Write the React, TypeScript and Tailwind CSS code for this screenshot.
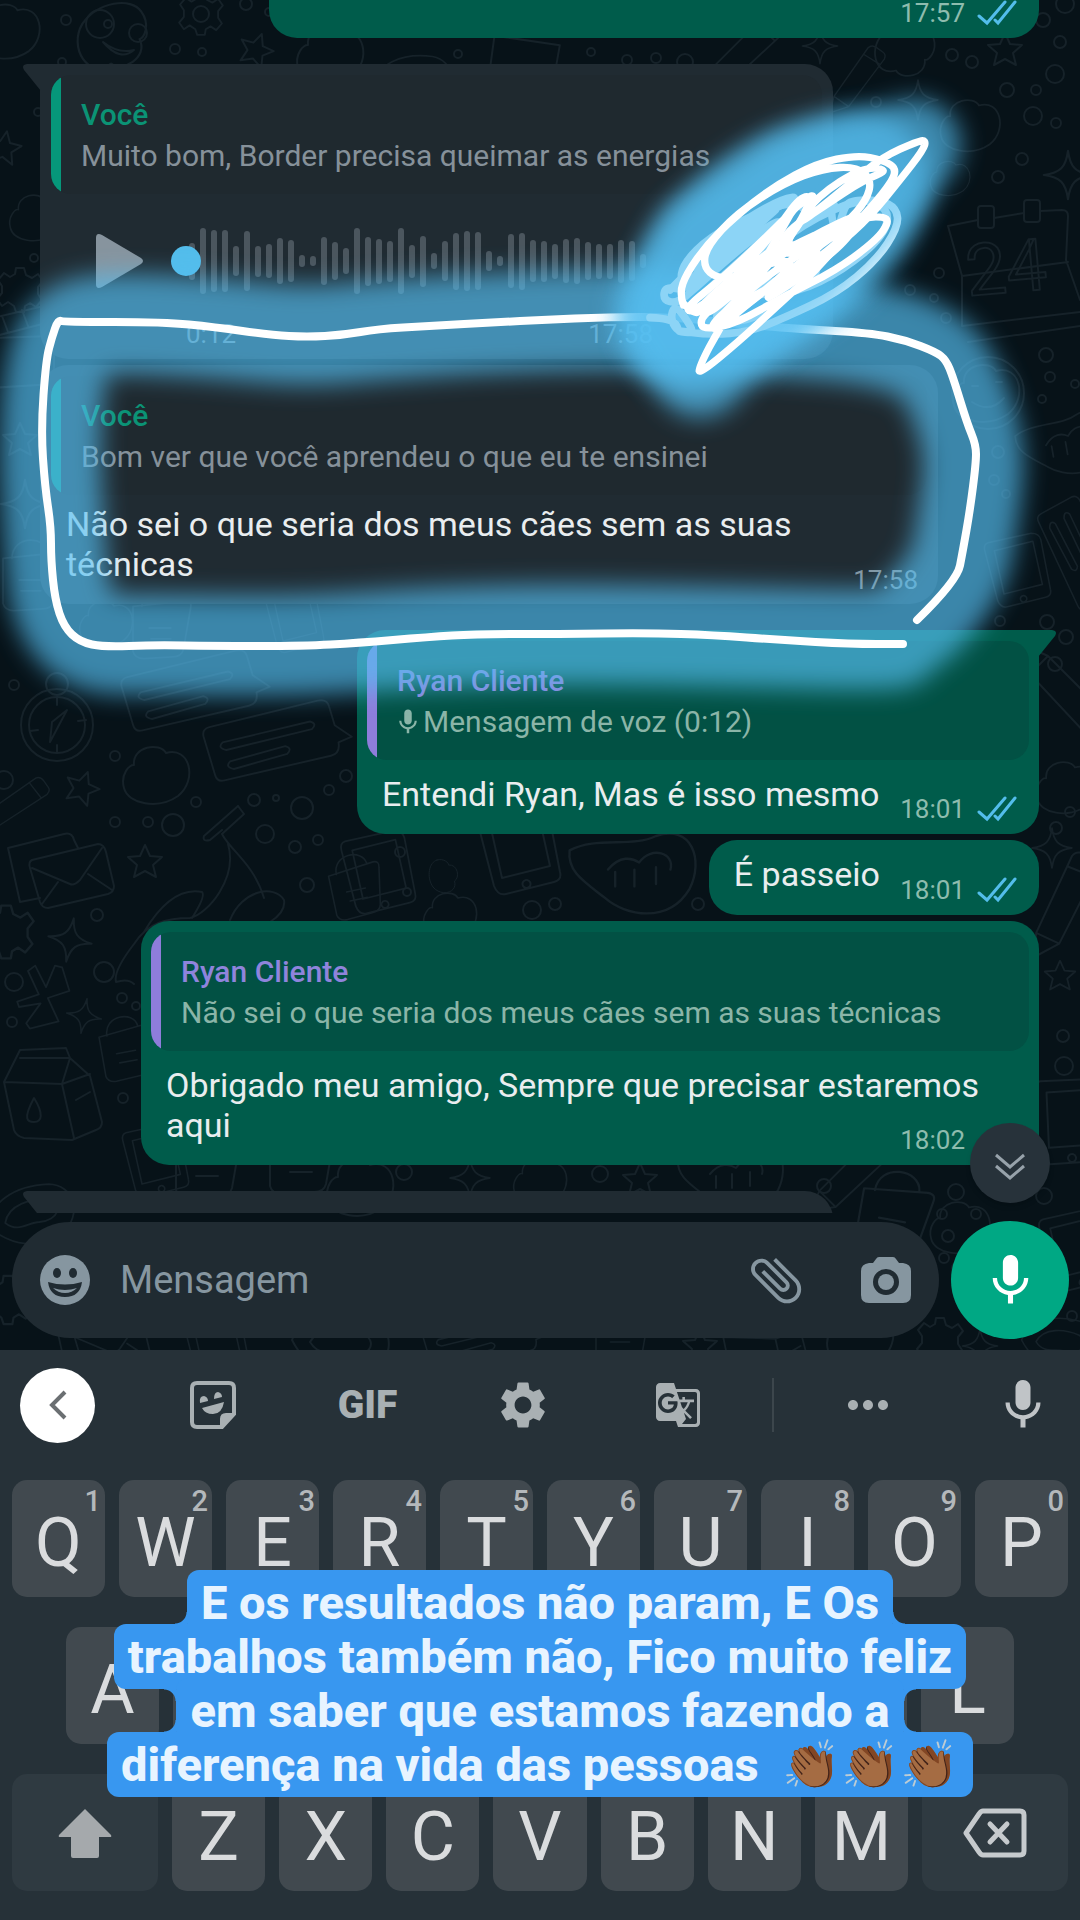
import { MdAttachFile, MdGTranslate, MdMic, MdMoreHoriz, MdSettings } from "react-icons/md";
import type { ReactNode } from "react";

type Point = [number, number];

/* Rounds a list of points into one continuous pen stroke. */
function smooth(points: Point[]) {
  let d = `M${points[0][0]} ${points[0][1]}`;
  for (let i = 1; i < points.length - 1; i++) {
    const [x, y] = points[i];
    const [nx, ny] = points[i + 1];
    d += ` Q${x} ${y} ${(x + nx) / 2} ${(y + ny) / 2}`;
  }
  const last = points[points.length - 1];
  return `${d} L${last[0]} ${last[1]}`;
}

const frame = smooth([
  [917, 620], [957, 581], [963, 550], [970, 510], [976, 463], [976, 445], [967, 423], [953, 377], [946, 360],
  [936, 352], [905, 340], [870, 333], [801, 329], [760, 326], [674, 317], [609, 317], [540, 320], [500, 322],
  [428, 326], [378, 329], [343, 335], [307, 337], [271, 335], [214, 327], [164, 322], [64, 322], [58, 320],
  [52, 337], [46, 360], [41, 430], [45, 487], [51, 527], [51, 560], [55, 600], [64, 627], [80, 642], [104, 647],
  [154, 645], [214, 646], [304, 646], [357, 643], [429, 637], [475, 634], [557, 634], [650, 633], [712, 635],
  [781, 640], [850, 644], [903, 644],
]);

const frameGlow = smooth([
  [917, 620], [957, 581], [968, 520], [976, 455], [960, 400], [936, 355], [870, 333], [760, 326], [640, 318],
  [500, 322], [378, 330], [307, 337], [214, 328], [110, 322], [66, 332], [54, 380], [50, 440], [52, 500],
  [56, 560], [62, 610], [90, 644], [154, 645], [304, 646], [429, 637], [557, 634], [700, 636], [860, 640],
  [895, 638],
]);

const scribbleUnder = smooth([
  [0, 563], [70, 565], [90, 610], [60, 570], [75, 520], [130, 600], [120, 610], [70, 600], [180, 615], [300, 605], [400, 565],
  [560, 490], [680, 390], [745, 290], [740, 235], [690, 210], [600, 210], [580, 240], [560, 320], [540, 240],
  [560, 215], [490, 260], [430, 210], [300, 260], [180, 320], [100, 400], [90, 460], [140, 440], [260, 320], [400, 220],
  [330, 280], [190, 420], [100, 480], [45, 470], [40, 510], [80, 520], [130, 480], [230, 390], [340, 300],
  [420, 260], [300, 420], [200, 480], [300, 500], [420, 480], [520, 420], [440, 420], [280, 500], [180, 560],
  [250, 580], [350, 550],
]);

const scribbleUnderFill = smooth([
  [60, 480], [110, 430], [180, 350], [290, 265], [400, 205], [450, 200], [340, 250], [200, 350], [130, 440],
  [150, 450], [260, 350], [400, 260], [360, 310], [240, 420], [150, 500], [170, 500], [300, 410], [460, 280],
  [640, 200], [720, 240], [700, 320], [580, 420], [440, 490], [300, 490],
]);

const scribbleOver = smooth([
  [100, 525], [88, 490], [110, 430], [170, 345], [250, 265], [370, 170], [500, 100], [620, 75], [700, 90],
  [745, 120], [700, 190], [610, 290], [500, 420], [380, 530], [260, 640], [150, 730], [145, 715], [210, 590],
  [290, 480], [420, 330], [490, 200], [450, 200], [380, 300], [220, 480], [120, 550], [110, 530], [210, 450],
  [350, 320], [470, 200], [500, 195], [420, 330], [330, 380], [180, 540], [150, 570], [160, 600], [260, 580],
  [400, 500], [560, 420], [680, 330], [718, 275], [700, 260], [640, 262], [500, 310], [330, 400], [210, 500],
  [150, 560], [180, 540], [330, 420], [480, 320], [650, 240], [580, 300], [400, 400], [240, 530], [180, 590],
  [200, 600], [320, 500], [440, 400], [380, 390], [270, 440], [200, 445], [160, 410], [170, 350], [260, 250],
  [400, 160], [520, 115], [620, 110], [665, 150], [650, 210], [590, 280], [480, 350], [390, 380], [400, 310],
  [520, 230], [640, 150], [720, 120], [640, 110], [500, 200], [430, 300], [600, 160], [700, 80], [800, 35],
  [828, 30], [820, 60], [750, 150], [660, 260], [560, 350], [470, 420], [360, 470], [240, 540],
]);

const scribbleOverFill = smooth([
  [105, 525], [140, 560], [160, 520], [250, 440], [330, 390], [240, 480], [160, 560], [230, 510], [350, 400],
  [300, 470], [200, 570], [260, 550], [360, 470], [460, 390], [520, 340], [420, 450], [330, 520], [440, 450],
  [560, 360], [620, 290], [540, 320], [440, 410], [380, 470], [500, 390], [640, 270], [560, 290], [480, 340],
  [400, 350], [460, 260], [500, 210], [440, 220], [400, 290], [360, 360],
]);

const MARK = "#54bff2";

function Markup() {
  return (
    <svg aria-hidden="true" viewBox="0 0 1080 1350" className="pointer-events-none absolute inset-x-0 top-0 z-20 w-full" fill="none" strokeLinecap="round" strokeLinejoin="round">
      <defs>
        <filter id="glow" filterUnits="userSpaceOnUse" x="-80" y="0" width="1240" height="860">
          <feGaussianBlur stdDeviation="12" />
        </filter>
      </defs>
      <g filter="url(#glow)" opacity="0.67">
        <path d={frameGlow} stroke={MARK} strokeWidth="100" />
      </g>
      <path d={frame} stroke="#fff" strokeWidth="8" />
      <g filter="url(#glow)" opacity="0.67">
        <ellipse cx="780" cy="240" rx="170" ry="98" transform="rotate(-36 780 240)" fill={MARK} />
        <ellipse cx="690" cy="330" rx="68" ry="62" fill={MARK} />
      </g>
      <g transform="translate(650 130) scale(.3333)" stroke="#fff" strokeWidth="23">
        <path d={scribbleUnder} />
        <path d={scribbleUnderFill} />
      </g>
      <g filter="url(#glow)" opacity="0.67">
        <path d="M700 372 L660 310 L700 240 L790 180 L860 158 L915 145 L860 215 L800 280 L740 330Z" fill={MARK} stroke={MARK} strokeWidth="92" />
      </g>
      <g transform="translate(650 130) scale(.3333)" stroke="#fff" strokeWidth="22">
        <path d={scribbleOver} />
        <path d={scribbleOverFill} />
      </g>
    </svg>
  );
}

const STAR = "M0-17 L5-6 L17-5 L8 3 L11 15 L0 9 L-11 15 L-8 3 L-17-5 L-5-6Z";
const SPARK = "M0-22 C2-7 7-2 22 0 C7 2 2 7 0 22 C-2 7-7 2-22 0 C-7-2-2-7 0-22Z";
const CLOUD = "M-32 10 C-36-4-26-14-22-13 C-24-32 4-36 10-25 C34-32 42 2 22 18 C2 32-28 26-32 10Z";
const GEAR =
  "M-4-22 H4 L6-15 L12-12 L18-16 L23-9 L18-3 V4 L22 10 L16 17 L10 13 L5 16 L4 22 H-4 L-6 16 L-12 12 L-18 16 L-23 9 L-18 3 V-4 L-22-10 L-16-17 L-10-13 L-5-16Z";
const NOTE = "M-66-24 L48-52 Q58-54 60-46 L66-26 L84-14 L70-8 Q72 4 62 6 L-50 32 Q-58 34-60 26 L-72-14 Q-74-22-66-24Z M-52-8 L40-30 Q48-28 42-22 L-48 0 Q-58-2-52-8Z M-44 12 L14-4 Q22-2 16 4 L-40 20 Q-50 18-44 12Z";
const ENVELOPE = "M-50-20 L6-34 Q14-36 16-28 L20-20 M-50-20 L-38 34 L-18 30 M-26-8 L40-24 Q46-24 48-16 L56 18 Q56 24 50 26 L-10 40 Q-16 40-18 34 L-28 0 Q-30-6-26-8Z M-26 0 L12 16 Q16 18 22 12 L44-20 M-16 36 L0 14 M54 22 L30 6";
const CARTON = "M-36-42 L10-44 L14-34 L34-16 L46 30 Q46 36 40 38 L16 48 L-32 46 Q-40 44-42 38 L-52-10 L-36-42Z M-36-34 L14-34 M-52-10 L6-8 L14-34 M6-8 L34-18 M6-8 L18 46 M-22 6 C-34 28-28 30-22 30 C-14 30-12 22-22 6Z M20 8 L34 0";
const POT = "M-30-24 L28-30 Q36-30 34-22 L26 24 Q24 32 14 32 L-18 34 Q-28 34-30 26Z M-20-24 C-20-50 18-50 20-30 M-12 0 H12 M-10 12 H12";
const PHONE = "M-30-34 L24-46 Q34-46 36-38 L48 24 Q50 32 42 34 L-6 46 Q-14 48-18 38 L-34-24 Q-36-32-30-34Z M-22-24 L26-36 L38 18 L-10 30Z M14 32 a4 4 0 1 0 1 0";
const LEMON = "M-48 0 C-40-24-8-34 30-22 C56-12 56 22 24 36 C-2 44-34 28-48 0Z M-30 2 C-20-16 6-14 24-6 C40 4 26 20 6 14 C-6 10-20 18-30 2Z";
const SHELL = "M-52-18 C-30-30 0-20 20-30 C50-40 60-10 48 14 C30 44-6 36-22 22 C-40 8-54 0-52-18Z M-20-2 C-10-14 0-12 6-8 C16-22 36-16 32-2 M-14 0 V12 M2-2 V12 M20-4 V10";
const PENCIL = "M-44 34 L-34 12 L26-48 Q32-52 38-46 L46-38 Q50-34 46-28 L-16 30Z M-34 12 L-16 30 M18-40 L38-22";
const CLAPPER = "M-30-30 L30-44 L36-28 L-26-12Z M-26-12 L40-14 V34 L-24 38Z M-12-34 L-6-18 M8-40 L14-24";
const ROTOR = "M-20-30 L-12-36 L0-12 L10-36 L18-34 L26-8 L2 0 L14 26 L-18 34 L-22 28 L-6 6 L-30 10 L-32 4 L-8-4Z";
const GUITAR = "M60-72 L66-64 L44-44 C52-28 76-14 86 20 M60-72 L26-42 Q24-36 32-38 L44-48 M50-34 C60 0 30 36 12 40 C-10 40-30 44-44 66 C-58 84-64 96-62 104 Q-50 100-44 106 M-34 54 C-16 24 4 10 24 14 Q28 18 14 40 M52 42 C64 12 96 6 106 22 Q108 34 92 44";

const doodles: [string, number, number, number, number][] = [
  [CLOUD, 8, 34, 0.95, 0], [CLOUD, 112, 34, 1.1, 160], [GEAR, 201, 14, 0.95, 0], [STAR, 256, 50, 1, 20], [CLOUD, 330, 58, 1, 0],
  [LEMON, 412, 78, 0.8, -10], [CLAPPER, 518, 52, 1, 10], [PENCIL, 740, 60, 0.9, 0], [SPARK, 820, 46, 0.8, 0], [CLOUD, 905, 48, 0.9, 180],
  [STAR, 1005, 50, 1, 0], [PENCIL, 856, 84, 0.7, -10], [SPARK, 918, 100, 0.9, 0], [CLOUD, 970, 128, 0.9, 0], [STAR, 4, 148, 1, 10],
  [CLOUD, 36, 220, 0.8, 0], [SPARK, 1068, 175, 1.1, 0], [CLOUD, 950, 180, 0.6, 0], [GEAR, 20, 290, 1, 0], [CLAPPER, 14, 350, 1, 0],
  [STAR, 20, 440, 1, 0], [SPARK, 25, 504, 1.1, 0], [POT, 30, 580, 0.9, 0], [SHELL, 1064, 444, 0.9, -10], [NOTE, 1072, 556, 0.8, 78],
  [CLOUD, 986, 396, 1, 0], [PHONE, 1012, 570, 0.8, 0], [POT, 160, 628, 0.9, 0], [CLOUD, 106, 626, 0.8, 0], [PHONE, 290, 620, 0.7, 0],
  [NOTE, 190, 700, 0.95, 0], [NOTE, 272, 750, 0.95, 0], [CLOUD, 156, 778, 1, 0], [STAR, 82, 788, 1, 20], [PENCIL, 12, 808, 0.7, 10],
  [ENVELOPE, 58, 868, 1, 0], [STAR, 145, 862, 1, 0], [GUITAR, 178, 878, 1, 0],
  [PHONE, 372, 872, 0.9, 0], [GEAR, 6, 932, 1.2, 0], [SPARK, 70, 940, 1, 10], [ROTOR, 46, 998, 0.9, 0], [SPARK, 84, 1016, 0.8, 10],
  [CARTON, 56, 1092, 1, 0], [POT, 126, 1052, 0.8, -10], [PHONE, 512, 848, 1, 0], [SHELL, 632, 872, 1.2, 0], [CLOUD, 442, 876, 0.5, 90],
  [POT, 356, 890, 0.8, -12], [CLOUD, 450, 918, 0.8, 0], [PENCIL, 1060, 690, 1, 90], [PENCIL, 1064, 910, 1, -20], [SPARK, 1052, 848, 0.9, 0],
  [CLOUD, 1066, 790, 0.9, 0], [STAR, 1060, 976, 0.9, 0], [PHONE, 1064, 1120, 1, 10], [POT, 206, 1164, 1, 0], [PHONE, 150, 1160, 0.8, 0],
  [POT, 300, 1160, 1, 0], [CLOUD, 360, 1190, 1, 0], [SPARK, 470, 1178, 0.9, 0], [CLOUD, 540, 1184, 0.8, 0], [STAR, 640, 1180, 1, 0],
  [SHELL, 730, 1176, 1, 0], [PENCIL, 850, 1180, 0.9, 0], [POT, 892, 1220, 1.1, 10], [CLOUD, 960, 1230, 0.9, 0], [PHONE, 1070, 1250, 0.9, 0],
  [LEMON, 30, 1212, 0.9, -20], [GEAR, 8, 1300, 1.1, 0], [ENVELOPE, 100, 1338, 0.9, 0], [PHONE, 210, 1340, 0.8, 0], [LEMON, 340, 1340, 1, 0],
  [NOTE, 480, 1346, 0.8, 0], [POT, 620, 1342, 0.8, 0], [STAR, 700, 1346, 1, 0], [CARTON, 770, 1346, 0.9, 0], [CLOUD, 860, 1340, 1, 0],
  [GEAR, 940, 1340, 1, 0], [SPARK, 980, 1346, 0.8, 0], [LEMON, 1060, 1340, 0.8, 0],
];

const dots: [number, number, number][] = [
  [66, 20, 5], [175, 49, 5], [202, 52, 4], [246, 4, 6], [269, 12, 4], [62, 62, 4], [458, 54, 4], [591, 52, 4], [627, 60, 5],
  [656, 58, 5], [685, 62, 8], [952, 55, 6], [972, 62, 6], [1060, 42, 6], [1043, 20, 7], [1065, 4, 9], [1055, 74, 9], [1007, 90, 7],
  [1036, 90, 5], [1033, 116, 9], [1056, 123, 5], [1022, 159, 6], [998, 177, 6], [876, 102, 5], [34, 258, 4], [38, 112, 4], [939, 273, 5],
  [910, 290, 5], [934, 298, 4], [946, 318, 5], [1046, 355, 7], [1050, 377, 5], [1042, 399, 4], [1075, 384, 4], [998, 452, 6],
  [994, 480, 5], [1006, 494, 4], [1000, 621, 5], [1047, 622, 7], [1066, 637, 7], [1055, 664, 7], [14, 685, 5], [115, 756, 5], [4, 780, 9],
  [196, 802, 5], [254, 800, 6], [276, 798, 3], [302, 808, 11], [115, 822, 5], [148, 822, 5], [173, 825, 11], [265, 834, 9], [295, 847, 6],
  [318, 840, 5], [307, 885, 7], [346, 776, 6], [329, 790, 5], [97, 915, 6], [14, 982, 9], [104, 972, 10], [12, 1022, 5], [122, 998, 5],
  [136, 1006, 4], [123, 1098, 5], [400, 852, 5], [532, 910, 9], [555, 904, 6], [407, 892, 4], [698, 904, 6], [1056, 828, 6], [1070, 812, 5],
  [1063, 1036, 6], [1064, 1066, 9], [404, 1172, 8], [600, 1174, 8], [824, 1186, 7], [956, 1192, 8], [942, 1214, 5], [976, 1214, 5],
  [948, 1236, 6], [944, 1258, 5], [1044, 1196, 8], [958, 1268, 6], [1072, 1316, 5],
];

function Wallpaper() {
  return (
    <svg aria-hidden="true" viewBox="0 0 1080 1350" className="pointer-events-none absolute inset-x-0 top-0 w-full" fill="none" stroke="#162229" strokeWidth="2" strokeLinejoin="round" strokeLinecap="round">
      {doodles.map(([d, x, y, scale, turn], i) => (
        <path key={i} d={d} transform={`translate(${x} ${y}) rotate(${turn}) scale(${scale})`} />
      ))}
      {dots.map(([cx, cy, r], i) => (
        <circle key={i} cx={cx} cy={cy} r={r} />
      ))}
      <g>
        <circle cx="100" cy="24" r="14" />
        <circle cx="138" cy="33" r="9" />
        <circle cx="108" cy="24" r="4" />
        <path d="M103 42 Q118 54 134 50 Q120 62 103 42Z" />
        <circle cx="201" cy="14" r="8" />
      </g>
      <g>
        <circle cx="57" cy="725" r="36" />
        <circle cx="57" cy="725" r="28" />
        <circle cx="57" cy="684" r="11" />
        <path d="M67 710 L50 742 L52 722Z M57 697 v8 M57 745 v8 M30 731 l8 -1 M78 721 l8-1" />
      </g>
      <g>
        <path d="M948 226 L978 220 M994 218 L1024 213 M1040 211 L1062 210 Q1068 210 1068 216 L1066 260 L1080 300 M948 226 L962 276 L1068 262 M962 276 V326 L1080 312 M968 342 L1080 326" />
        <rect x="978" y="206" width="16" height="22" rx="3" />
        <rect x="1024" y="200" width="16" height="22" rx="3" />
        <text x="968" y="296" fontSize="72" fontFamily="Roboto, sans-serif" transform="rotate(-5 968 296)">24</text>
      </g>
      <g>
        <circle cx="988" cy="393" r="36" />
        <path d="M972 386 h6 M996 382 h6 M972 402 Q990 414 1004 398" />
      </g>
    </svg>
  );
}

function Ticks() {
  return (
    <svg aria-label="Lida" viewBox="0 0 40 26" className="h-[26px] w-10" fill="none" stroke="#53bdeb" strokeWidth="3" strokeLinecap="round">
      <path d="M2 16 L10 23 L28 2" />
      <path d="M18 20 L21 23 L38 2" />
    </svg>
  );
}

function Stamp({ time, sent = false }: { time: string; sent?: boolean }) {
  return (
    <div className={sent ? "absolute right-[22px] bottom-3 flex items-center gap-3 text-[#8ebcae]" : "absolute right-5 bottom-3 flex text-[#8696a0]"}>
      <time className="text-[26px] leading-6">{time}</time>
      {sent && <Ticks />}
    </div>
  );
}

function Quote({ name, children, sent = false }: { name: string; children: ReactNode; sent?: boolean }) {
  return (
    <div className={`flex overflow-hidden rounded-[20px] ${sent ? "mx-[10px] bg-[#025144]" : "mx-[11px] bg-[#1f292f]"}`}>
      <div className={`w-[10px] shrink-0 ${sent ? "bg-[#8e7ddb]" : "bg-[#06977a]"}`} />
      <div className="px-5 pt-[19px] pb-[18px] text-[30px] leading-[41px]">
        <div className={`font-medium ${sent ? "text-[#8f84dc]" : "text-[#0b9375]"}`}>{name}</div>
        <div className={`flex items-center ${sent ? "text-[#8bb5a8]" : "text-[#86919a]"}`}>{children}</div>
      </div>
    </div>
  );
}

function Tail({ side }: { side: "left" | "right" }) {
  return side === "left" ? (
    <svg aria-hidden="true" viewBox="0 0 18 27" className="absolute top-0 -left-[17px] h-[27px] w-[18px] fill-[#202b32]">
      <path d="M18 0 H4 Q-2 1 1 6 L18 27Z" />
    </svg>
  ) : (
    <svg aria-hidden="true" viewBox="0 0 18 27" className="absolute top-0 -right-[17px] h-[27px] w-[18px] fill-[#005c4b]">
      <path d="M0 0 H14 Q20 1 17 6 L0 27Z" />
    </svg>
  );
}

const wave = [
  37, 66, 62, 62, 30, 60, 31, 34, 46, 42, 12, 10, 48, 38, 26, 66, 49, 45, 41, 66, 33, 51, 16, 40, 57, 60, 58, 20, 10, 54, 57, 42, 41, 35, 44,
  46, 38, 35, 35, 43, 40, 14,
];

function VoiceNote() {
  return (
    <>
      <div className="mt-[34px] flex h-[66px] items-center pl-14">
        <button type="button" aria-label="Reproduzir" className="mr-[46px]">
          <svg aria-hidden="true" viewBox="0 0 47 54" className="h-[54px] w-[47px] fill-[#87949e]">
            <path d="M0 4 Q0-2 6 1 L45 24 Q49 27 45 30 L6 53 Q0 56 0 50Z" />
          </svg>
        </button>
        <div className="relative flex items-center gap-[5px]">
          {wave.map((height, i) => (
            <span key={i} className="w-[6px] rounded-full bg-[#4b565e]" style={{ height }} />
          ))}
          <span className="absolute top-1/2 -left-[18px] size-[30px] -translate-y-1/2 rounded-full bg-[#53bdeb]" />
        </div>
      </div>
      <div className="mt-7 mb-[13px] ml-[146px] flex w-[467px] justify-between text-[26px] leading-6 text-[#8696a0]">
        <span>0:12</span>
        <time>17:58</time>
      </div>
    </>
  );
}

function Messages() {
  return (
    <div className="relative flex min-h-0 flex-1 flex-col gap-[26px] overflow-hidden pr-[41px] pl-10 text-[34px] leading-10 text-[#e9edef]">
      <div className="relative h-[38px] w-[770px] max-w-full shrink-0 self-end rounded-b-[28px] bg-[#005c4b]">
        <Stamp time="17:57" sent />
      </div>

      <div className="flex shrink-0 flex-col items-start gap-[6px]">
        <div className="relative w-[793px] max-w-full rounded-[28px] rounded-tl-none bg-[#202b32] pt-[11px]">
          <Tail side="left" />
          <Quote name="Você">Muito bom, Border precisa queimar as energias</Quote>
          <VoiceNote />
        </div>
        <div className="relative w-[898px] max-w-full rounded-[28px] bg-[#202b32] pt-[11px] pb-5">
          <Quote name="Você">Bom ver que você aprendeu o que eu te ensinei</Quote>
          <p className="mt-[9px] pr-10 pl-[26px]">Não sei o que seria dos meus cães sem as suas técnicas</p>
          <Stamp time="17:58" />
        </div>
      </div>

      <div className="flex shrink-0 flex-col items-end gap-[6px]">
        <div className="relative w-[682px] max-w-full rounded-[28px] rounded-tr-none bg-[#005c4b] pt-[11px] pb-5">
          <Tail side="right" />
          <Quote name="Ryan Cliente" sent>
            <MdMic aria-hidden="true" className="-ml-1 size-[30px]" />
            Mensagem de voz (0:12)
          </Quote>
          <p className="mt-[14px] pl-[25px]">Entendi Ryan, Mas é isso mesmo</p>
          <Stamp time="18:01" sent />
        </div>
        <div className="relative rounded-[28px] bg-[#005c4b] pt-[14px] pr-[159px] pb-[21px] pl-[25px]">
          <p>É passeio</p>
          <Stamp time="18:01" sent />
        </div>
        <div className="relative w-[898px] max-w-full rounded-[28px] bg-[#005c4b] pt-[11px] pb-5">
          <Quote name="Ryan Cliente" sent>Não sei o que seria dos meus cães sem as suas técnicas</Quote>
          <p className="mt-[14px] pr-10 pl-[25px]">Obrigado meu amigo, Sempre que precisar estaremos aqui</p>
          <Stamp time="18:02" sent />
        </div>
      </div>

      <div className="relative h-16 w-[793px] max-w-full shrink-0 rounded-[28px] rounded-tl-none bg-[#202b32]">
        <Tail side="left" />
      </div>
    </div>
  );
}

function Composer() {
  return (
    <form className="relative mt-2 mb-[11px] flex items-center gap-3 pr-[11px] pl-3" onSubmit={(e) => e.preventDefault()}>
      <div className="flex h-[116px] min-w-0 flex-1 items-center rounded-full bg-[#202b32] px-7 text-[#8696a0]">
        <button type="button" aria-label="Emojis">
          <svg aria-hidden="true" viewBox="0 0 50 50" className="size-[50px]">
            <circle cx="25" cy="25" r="25" fill="#8696a0" />
            <g fill="#202b32">
              <ellipse cx="17" cy="18" rx="4" ry="5" />
              <ellipse cx="33" cy="18" rx="4" ry="5" />
              <path d="M8 27 Q25 32 42 27 Q40 42 25 42 Q10 42 8 27Z" />
            </g>
            <path d="M13 33 Q25 37 37 33 Q32 38 25 38 Q18 38 13 33Z" fill="#8696a0" />
          </svg>
        </button>
        <input type="text" aria-label="Mensagem" placeholder="Mensagem" className="ml-[30px] min-w-0 flex-1 bg-transparent text-[38px] outline-none placeholder:text-[#8696a0]" />
        <button type="button" aria-label="Anexar" className="mr-[54px]">
          <MdAttachFile className="size-[62px] -rotate-45" />
        </button>
        <button type="button" aria-label="Câmera">
          <svg aria-hidden="true" viewBox="0 0 50 46" className="h-[46px] w-[50px] fill-current">
            <path fillRule="evenodd" d="M18 0 H32 Q34 0 35 2 L38 6 H42 Q50 7 50 14 V38 Q50 46 42 46 H8 Q0 46 0 38 V14 Q0 7 8 6 H12 L15 2 Q16 0 18 0Z M25 12 A13 13 0 1 0 25 38 A13 13 0 1 0 25 12Z" />
            <circle cx="25" cy="25" r="8" />
          </svg>
        </button>
      </div>
      <button type="button" aria-label="Gravar áudio" className="flex size-[118px] shrink-0 items-center justify-center rounded-full bg-[#00a884] text-white">
        <MdMic className="size-[61px]" />
      </button>
    </form>
  );
}

function Tool({ label, children }: { label: string; children: ReactNode }) {
  return (
    <button type="button" aria-label={label} className="flex size-[75px] items-center justify-center text-[#a9b0b3]">
      {children}
    </button>
  );
}

function Toolbar() {
  return (
    <div className="flex h-[110px] items-center justify-between px-5">
      <div className="flex gap-20">
        <button type="button" aria-label="Voltar" className="flex size-[75px] items-center justify-center rounded-full bg-white">
          <svg aria-hidden="true" viewBox="0 0 20 30" className="h-[30px] w-5" fill="none" stroke="#6b6f72" strokeWidth="4">
            <path d="M17 2 L4 15 L17 28" />
          </svg>
        </button>
        <Tool label="Figurinhas">
          <svg aria-hidden="true" viewBox="0 0 46 48" className="h-12 w-[46px]" fill="currentColor">
            <path d="M7 2 H39 Q44 2 44 7 V33 L32 46 H7 Q2 46 2 41 V7 Q2 2 7 2Z" fill="none" stroke="currentColor" strokeWidth="4" />
            <path d="M30 46 V38 Q30 32 36 32 H44Z M10 22 Q9 15 14 15 Q18 16 18 20Z M24 18 Q24 11 28 11 Q32 12 32 16Z M12 27 L34 21 Q32 33 23 33 Q15 33 12 27Z" />
          </svg>
        </Tool>
        <button type="button" className="flex size-[75px] items-center justify-center text-[39px] font-black text-[#a9b0b3]">GIF</button>
        <Tool label="Configurações">
          <MdSettings className="size-[56px]" />
        </Tool>
        <Tool label="Traduzir">
          <MdGTranslate className="size-[48px]" />
        </Tool>
      </div>
      <div className="h-[54px] w-[2px] bg-[#3c464c]" />
      <div className="flex gap-20">
        <Tool label="Mais">
          <MdMoreHoriz className="size-[60px]" />
        </Tool>
        <Tool label="Digitação por voz">
          <MdMic className="size-[60px] text-[#c0c4c7]" />
        </Tool>
      </div>
    </div>
  );
}

function Key({ letter, hint }: { letter: string; hint?: string }) {
  return (
    <button type="button" className="relative flex h-[117px] min-w-0 flex-1 items-center justify-center rounded-[15px] bg-[#41494f] pt-2 text-[68px] leading-none text-[#dadcde]">
      {letter}
      {hint && <span className="absolute top-[5px] right-1 text-[29px] leading-8 font-medium text-[#b4b8bb]">{hint}</span>}
    </button>
  );
}

function Keyboard() {
  return (
    <div className="bg-[#263138] pb-[29px]">
      <Toolbar />
      <div className="mt-5 flex flex-col gap-[30px] px-3">
        <div className="flex gap-[14px]">
          {[..."QWERTYUIOP"].map((letter, i) => (
            <Key key={letter} letter={letter} hint={String((i + 1) % 10)} />
          ))}
        </div>
        <div className="flex gap-[14px] px-[54px]">
          {[..."ASDFGHJKL"].map((letter) => (
            <Key key={letter} letter={letter} />
          ))}
        </div>
        <div className="flex gap-[14px]">
          <button type="button" aria-label="Maiúsculas" className="flex h-[117px] w-[146px] items-center justify-center rounded-[15px] bg-[#2f3a41]">
            <svg aria-hidden="true" viewBox="0 0 54 50" className="h-[50px] w-[54px] fill-[#a5a9ac]">
              <path d="M27 1 L53 27 Q54 29 52 29 H41 V48 Q41 50 39 50 H15 Q13 50 13 48 V29 H2 Q0 29 1 27Z" />
            </svg>
          </button>
          {[..."ZXCVBNM"].map((letter) => (
            <Key key={letter} letter={letter} />
          ))}
          <button type="button" aria-label="Apagar" className="flex h-[117px] w-[146px] items-center justify-center rounded-[15px] bg-[#2f3a41]">
            <svg aria-hidden="true" viewBox="0 0 64 50" className="h-[50px] w-16" fill="none" stroke="#c6cacd" strokeWidth="5" strokeLinejoin="round" strokeLinecap="round">
              <path d="M20 3 H57 Q61 3 61 7 V43 Q61 47 57 47 H20 Q18 47 16 44 L3 25 L16 6 Q18 3 20 3Z" />
              <path d="M27 16 L44 34 M44 16 L27 34" />
            </svg>
          </button>
        </div>
      </div>
    </div>
  );
}

/* Inner corners that join a narrow caption line to the wider lines beside it. */
function Fillets({ top = false }: { top?: boolean }) {
  return (
    <>
      <span className="absolute bottom-[11px] -left-3 size-3 bg-[radial-gradient(circle_at_0_0,transparent_11px,#3897f0_12px)]" />
      <span className="absolute -right-3 bottom-[11px] size-3 bg-[radial-gradient(circle_at_100%_0,transparent_11px,#3897f0_12px)]" />
      {top && (
        <>
          <span className="absolute top-[11px] -left-3 size-3 bg-[radial-gradient(circle_at_0_100%,transparent_11px,#3897f0_12px)]" />
          <span className="absolute top-[11px] -right-3 size-3 bg-[radial-gradient(circle_at_100%_100%,transparent_11px,#3897f0_12px)]" />
        </>
      )}
    </>
  );
}

function CaptionLine({ children, joins }: { children: ReactNode; joins?: "below" | "both" }) {
  return (
    <span className="relative -mt-[11px] rounded-xl bg-[#3897f0] px-[14px]">
      <span className="relative z-10 whitespace-pre">{children}</span>
      {joins && <Fillets top={joins === "both"} />}
    </span>
  );
}

function Caption() {
  return (
    <p className="absolute inset-x-0 bottom-[123px] z-30 flex flex-col items-center text-[47px] leading-[65px] font-extrabold text-[#e8f4ff]">
      <CaptionLine joins="below">E os resultados não param, E Os</CaptionLine>
      <CaptionLine>trabalhos também não, Fico muito feliz</CaptionLine>
      <CaptionLine joins="both">em saber que estamos fazendo a</CaptionLine>
      <CaptionLine>diferença na vida das pessoas  👏🏾👏🏾👏🏾</CaptionLine>
    </p>
  );
}

export default function App() {
  return (
    <div className="relative flex h-screen flex-col overflow-hidden font-[Roboto,sans-serif]">
      <main className="relative flex min-h-0 flex-1 flex-col overflow-hidden bg-[#071218]">
        <Wallpaper />
        <Messages />
        <Composer />
        <button type="button" aria-label="Ir para o fim" className="absolute right-[30px] bottom-[147px] z-10 flex size-20 items-center justify-center rounded-full bg-[#27323a] shadow-md">
          <svg aria-hidden="true" viewBox="0 0 32 28" className="mt-2 h-7 w-8" fill="none" stroke="#97a2aa" strokeWidth="3">
            <path d="M2 2 L16 14 L30 2 M2 13 L16 25 L30 13" />
          </svg>
        </button>
        <Markup />
      </main>
      <Keyboard />
      <Caption />
    </div>
  );
}
